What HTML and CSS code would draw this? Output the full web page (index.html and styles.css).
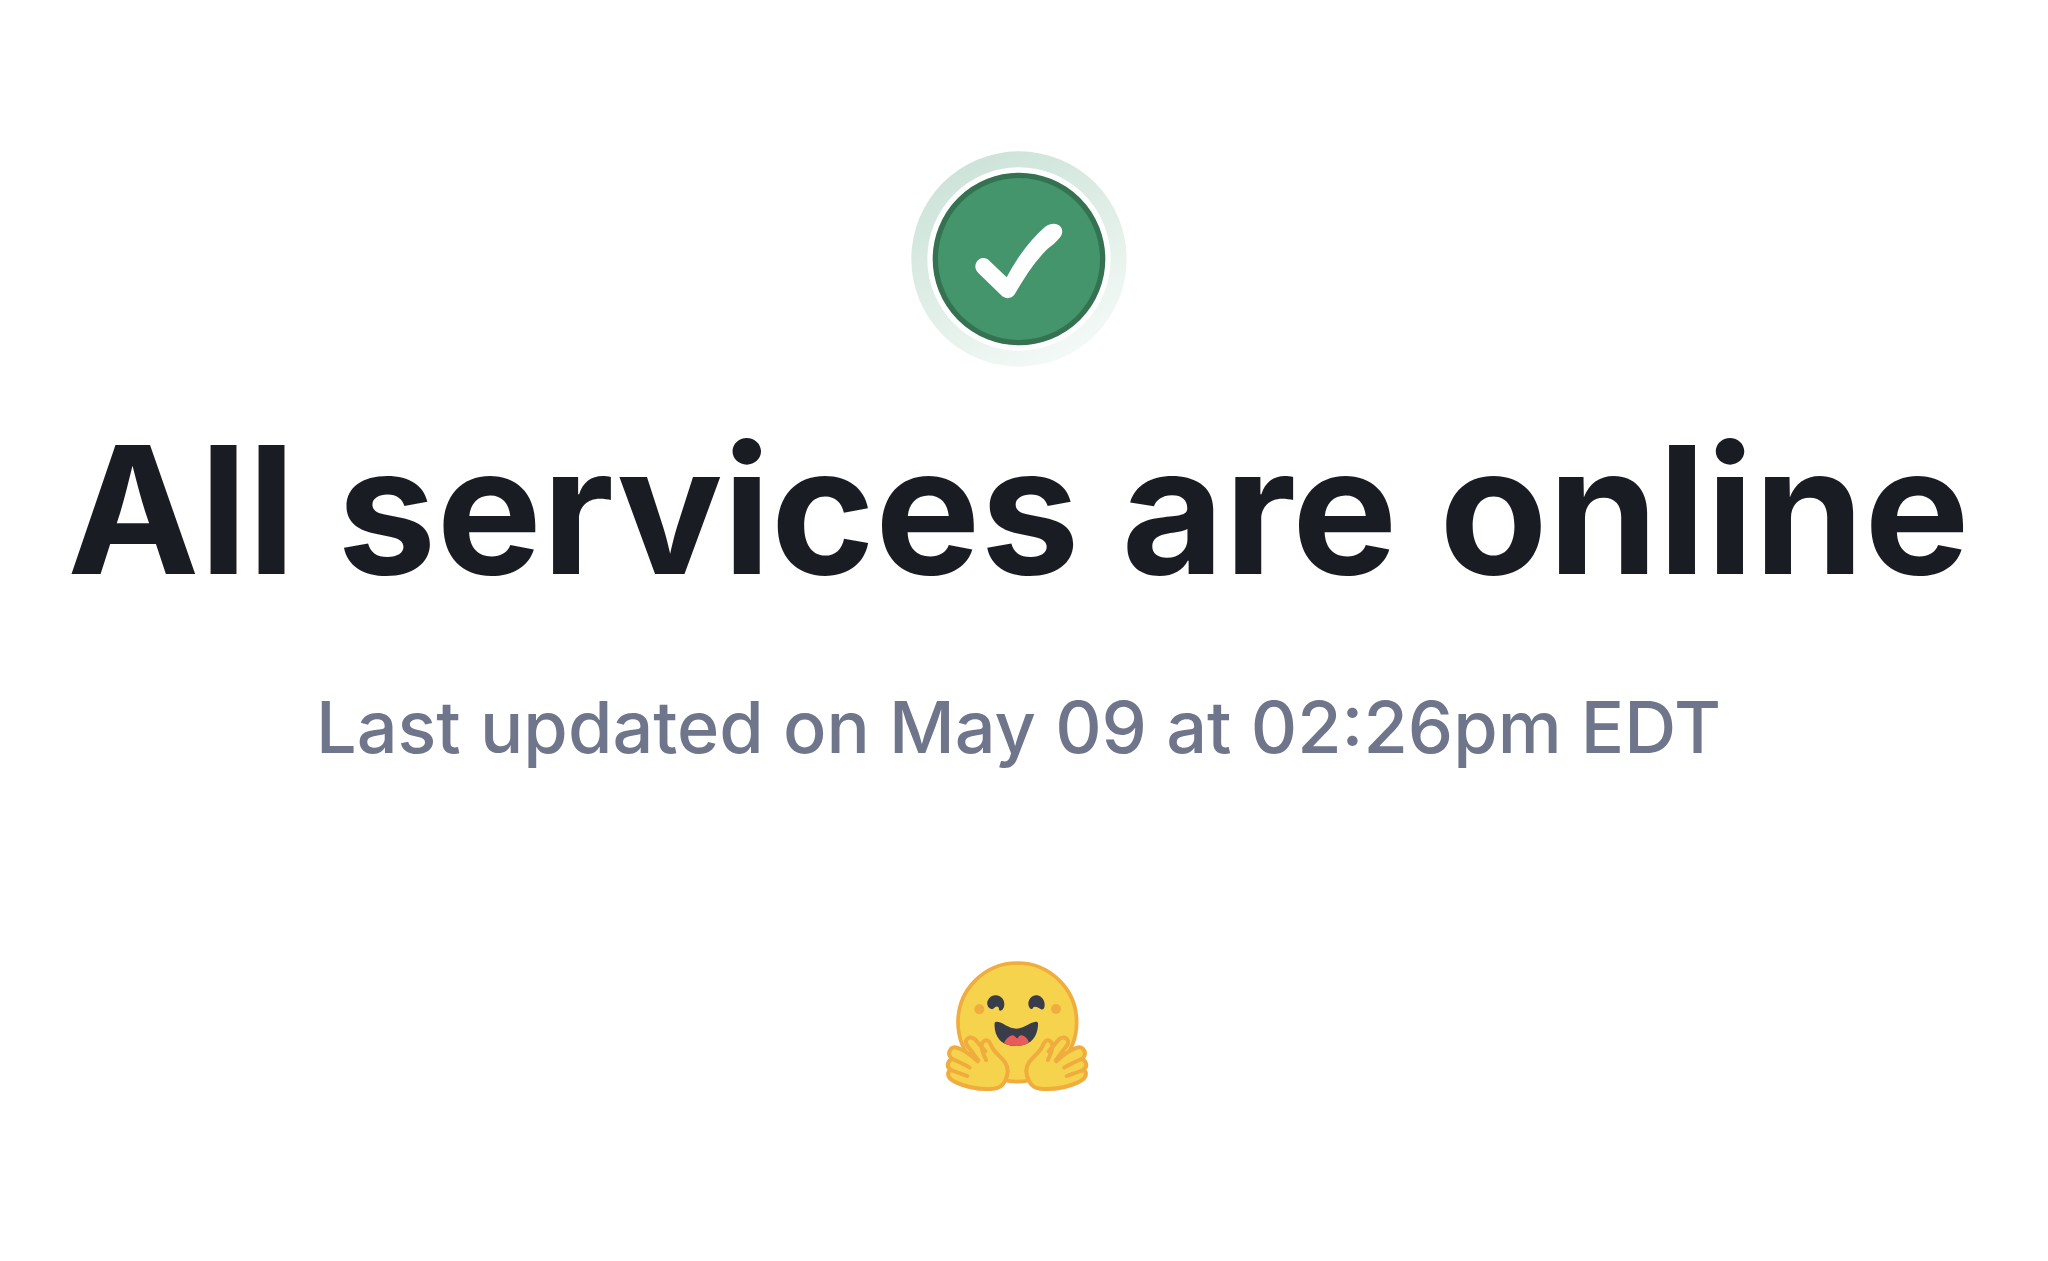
FILE: index.html
```html
<!DOCTYPE html>
<html lang="en">
<head>
<meta charset="utf-8">
<meta name="viewport" content="width=device-width, initial-scale=1">
<title>Status</title>
<link rel="stylesheet" href="styles.css">
</head>
<body>
<main class="status">
  <svg class="status-icon" viewBox="32 32 648 648" role="img" aria-label="Online">
    <defs>
      <linearGradient id="halo" x1="0.25" y1="0.1" x2="0.7" y2="0.95">
        <stop offset="0" stop-color="#cee4da"/>
        <stop offset="1" stop-color="#f3f9f6"/>
      </linearGradient>
    </defs>
    <circle cx="356" cy="356" r="323" fill="url(#halo)"/>
    <circle cx="356" cy="356" r="275" fill="#fff"/>
    <circle cx="356" cy="356" r="251" fill="#44946c" stroke="#357251" stroke-width="16"/>
    <path d="M249 353C237 353 226 363 225 378C225 386 228 392 234 398L302 464C315 477 332 477 343 462C373 410 404 363 442 325C455 316 468 304 478 292C494 275 484 250 461 250C449 250 441 254 433 261C389 299 350 352 319 411L267 361C262 356 257 353 249 353Z" fill="#fff"/>
  </svg>
  <h1 class="status-title">All services are online</h1>
  <p class="status-updated">Last updated on May 09 at 02:26pm EDT</p>
  <svg class="brand" viewBox="44 46 444 396" role="img" aria-label="Hugging Face">
    <defs>
      <g id="hand" fill="#f6d34c" stroke="#f0ac3d" stroke-width="12" stroke-linecap="round" stroke-linejoin="round">
        <path d="M167 346C163 335 155 323 154 309C152 294 162 284 172 288C178 290 181 300 186 309C193 324 213 337 224 353C235 369 234 388 225 407C219 421 207 431 190 432C153 435 109 428 77 413C62 406 50 398 54 384C55 379 59 377 62 377C53 371 50 363 54 354C57 347 62 344 67 344C57 337 54 327 58 319C62 309 71 306 80 309C90 312 96 317 105 321C110 317 113 314 113 312C107 304 104 294 109 286C115 276 127 276 135 285C148 300 158 311 166 324" stroke="none"/>
        <path d="M167 346C163 335 155 323 154 309C152 294 162 284 172 288C178 290 181 300 186 309C193 324 213 337 224 353C235 369 234 388 225 407C219 421 207 431 190 432C153 435 109 428 77 413C62 406 50 398 54 384C55 379 59 377 64 377C53 371 50 363 54 354C57 347 62 344 67 344C57 337 54 327 58 319C62 309 71 306 80 309C103 317 125 334 142 350M144 347L113 306C107 299 104 292 109 285C115 276 127 276 135 285L165 320M65 342C82 351 102 358 118 369M62 376C78 383 95 388 111 394" fill="none"/>
      </g>
    </defs>
    <circle cx="261" cy="233" r="178" fill="#f6d34c" stroke="#f0ac3d" stroke-width="11"/>
    <circle cx="147" cy="194" r="15" fill="#f0ac3d"/>
    <circle cx="377" cy="193" r="15" fill="#f0ac3d"/>
    <path d="M183 193C173 190 168 178 172 168C177 156 188 151 199 152C213 154 222 165 222 178C222 189 217 197 210 198C204 198 208 188 202 186C194 183 190 196 183 193Z" fill="#393c49"/>
    <path d="M331 193C341 200 345 184 342 173C339 160 329 152 317 152C304 153 295 163 294 176C294 184 297 191 302 193C309 195 307 185 313 186C321 186 325 190 331 193Z" fill="#393c49"/>
    <path d="M193 234C197 228 211 233 221 239C238 249 247 252 258 252C271 252 283 246 297 238C309 231 321 228 323 235C324 253 318 274 305 287C293 299 275 304 258 304C239 304 220 298 208 286C196 273 191 252 193 234Z" fill="#393c49"/>
    <path d="M221 294C227 283 236 274 245 272C253 270 257 281 260 281C264 281 266 270 274 272C284 274 291 281 296 293C280 307 238 307 221 294Z" fill="#e85b5d"/>
    <use href="#hand"/>
    <use href="#hand" transform="translate(520 0) scale(-1 1)"/>
  </svg>
</main>
</body>
</html>
```
FILE: styles.css
```css
body {
  margin: 0;
  background: #fff;
  font-family: Inter, "Liberation Sans", sans-serif;
}

.status {
  display: flex;
  flex-direction: column;
  align-items: center;
  padding: 151px 11px 140px 0;
  text-align: center;
}

.status-icon {
  width: 216px;
  height: 216px;
}

.status-title {
  margin: 43px 0 0;
  color: #1a1c23;
  font-size: 177px;
  font-weight: 700;
  line-height: 200px;
}

.status-updated {
  margin: 77px 0 0;
  color: #6f768b;
  font-size: 72px;
  font-weight: 500;
  line-height: 80px;
}

.brand {
  width: 148px;
  height: 132px;
  margin-top: 193px;
}
```
